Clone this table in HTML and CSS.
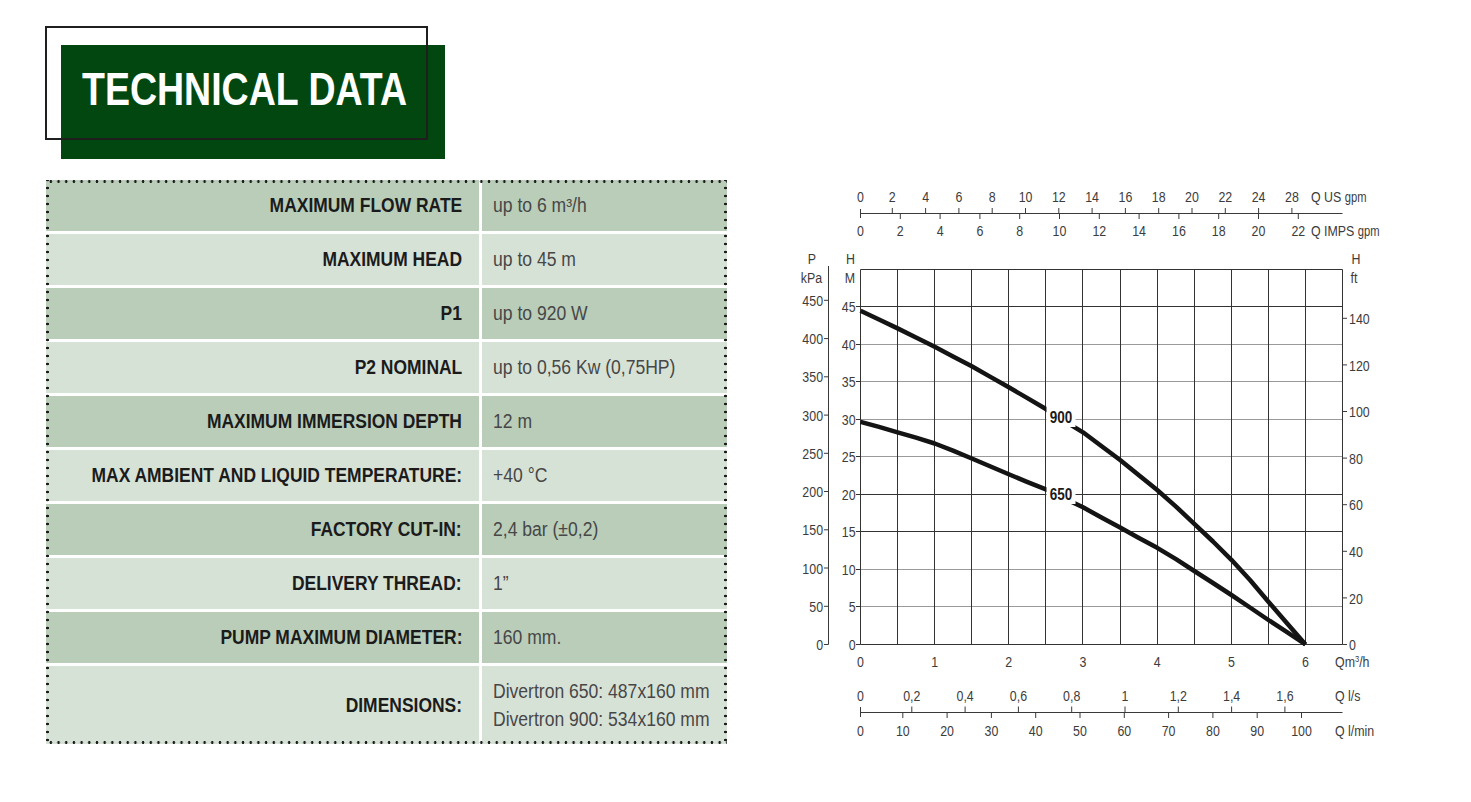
FILE: index.html
```html
<!DOCTYPE html>
<html lang="en">
<head>
<meta charset="utf-8">
<title>Technical data</title>
<link rel="stylesheet" href="styles.css">
</head>
<body>
<main class="sheet">
  <section class="specs">
    <div class="title"><h1>TECHNICAL DATA</h1></div>
    <div class="table">
      <div class="cell k d"><span>MAXIMUM FLOW RATE</span></div><div class="cell v d"><span>up to 6 m³/h</span></div>
      <div class="cell k l"><span>MAXIMUM HEAD</span></div><div class="cell v l"><span>up to 45 m</span></div>
      <div class="cell k d"><span>P1</span></div><div class="cell v d"><span>up to 920 W</span></div>
      <div class="cell k l"><span>P2 NOMINAL</span></div><div class="cell v l"><span>up to 0,56 Kw (0,75HP)</span></div>
      <div class="cell k d"><span>MAXIMUM IMMERSION DEPTH</span></div><div class="cell v d"><span>12 m</span></div>
      <div class="cell k l"><span>MAX AMBIENT AND LIQUID TEMPERATURE:</span></div><div class="cell v l"><span>+40 °C</span></div>
      <div class="cell k d"><span>FACTORY CUT-IN:</span></div><div class="cell v d"><span>2,4 bar (±0,2)</span></div>
      <div class="cell k l"><span>DELIVERY THREAD:</span></div><div class="cell v l"><span>1”</span></div>
      <div class="cell k d"><span>PUMP MAXIMUM DIAMETER:</span></div><div class="cell v d"><span>160 mm.</span></div>
      <div class="cell k l"><span>DIMENSIONS:</span></div><div class="cell v l two"><span>Divertron 650: 487x160 mm<br>Divertron 900: 534x160 mm</span></div>
    </div>
  </section>
  <figure class="chart-wrap">
    <svg class="chart" viewBox="770 180 620 570" width="620" height="570" xmlns="http://www.w3.org/2000/svg">
      <!-- top axis -->
      <g class="axis">
        <line x1="860.5" y1="213.5" x2="1342.5" y2="213.5"/>
        <line x1="860.5" y1="209" x2="860.5" y2="218"/>
        <path d="M892.3 208V213.5M925.6 208V213.5M958.9 208V213.5M992.2 208V213.5M1025.5 208V213.5M1058.8 208V213.5M1092.1 208V213.5M1125.4 208V213.5M1158.7 208V213.5M1192 208V213.5M1225.3 208V213.5M1258.6 208V213.5M1291.9 208V213.5"/>
        <path d="M900.3 213.5V219M940.1 213.5V219M979.9 213.5V219M1019.7 213.5V219M1059.5 213.5V219M1099.3 213.5V219M1139.1 213.5V219M1178.9 213.5V219M1218.7 213.5V219M1258.5 213.5V219M1298.3 213.5V219"/>
      </g>
      <g class="lbl mid">
        <text x="860.5" y="202.5">0</text><text x="892.3" y="202.5">2</text><text x="925.6" y="202.5">4</text><text x="958.9" y="202.5">6</text><text x="992.2" y="202.5">8</text><text x="1025.5" y="202.5">10</text><text x="1058.8" y="202.5">12</text><text x="1092.1" y="202.5">14</text><text x="1125.4" y="202.5">16</text><text x="1158.7" y="202.5">18</text><text x="1192" y="202.5">20</text><text x="1225.3" y="202.5">22</text><text x="1258.6" y="202.5">24</text><text x="1291.9" y="202.5">28</text>
        <text x="860.5" y="236.5">0</text><text x="900.3" y="236.5">2</text><text x="940.1" y="236.5">4</text><text x="979.9" y="236.5">6</text><text x="1019.7" y="236.5">8</text><text x="1059.5" y="236.5">10</text><text x="1099.3" y="236.5">12</text><text x="1139.1" y="236.5">14</text><text x="1178.9" y="236.5">16</text><text x="1218.7" y="236.5">18</text><text x="1258.5" y="236.5">20</text><text x="1298.3" y="236.5">22</text>
      </g>
      <g class="lbl">
        <text x="1311" y="202.5">Q US <tspan class="sm">gpm</tspan></text>
        <text x="1311" y="236.5">Q IMPS <tspan class="sm">gpm</tspan></text>
      </g>

      <!-- grid -->
      <g class="hgray">
        <path d="M860.5 606.5H1342.5M860.5 569.5H1342.5M860.5 456.5H1342.5M860.5 419.5H1342.5M860.5 381.5H1342.5M860.5 344.5H1342.5"/>
      </g>
      <g class="hdark">
        <path d="M860.5 644.5H1342.5M860.5 531.5H1342.5M860.5 494.5H1342.5M860.5 306.5H1342.5M860.5 269.5H1342.5"/>
        <path d="M856 644.5H860.5M856 606.5H860.5M856 569.5H860.5M856 531.5H860.5M856 494.5H860.5M856 456.5H860.5M856 419.5H860.5M856 381.5H860.5M856 344.5H860.5M856 306.5H860.5"/>
      </g>
      <g class="vgrid">
        <path d="M860.5 269.5V644.5M897.5 269.5V644.5M934.5 269.5V644.5M971.5 269.5V644.5M1008.5 269.5V644.5M1045.5 269.5V644.5M1082.5 269.5V644.5M1120.5 269.5V644.5M1157.5 269.5V644.5M1194.5 269.5V644.5M1231.5 269.5V644.5M1268.5 269.5V644.5M1305.5 269.5V644.5M1342.5 269.5V644.5"/>
      </g>

      <!-- side axes -->
      <g class="axis">
        <path d="M828.5 266V644.5"/>
        <path d="M824 644.5H828.5M824 606.3H828.5M824 568H828.5M824 529.8H828.5M824 491.5H828.5M824 453.3H828.5M824 415.1H828.5M824 376.8H828.5M824 338.6H828.5M824 300.3H828.5"/>
        <path d="M1342.5 644.5H1347M1342.5 597.9H1347M1342.5 551.3H1347M1342.5 504.7H1347M1342.5 458.1H1347M1342.5 411.5H1347M1342.5 364.9H1347M1342.5 318.3H1347"/>
      </g>
      <g class="lbl end">
        <text x="823" y="650.2">0</text><text x="823" y="612">50</text><text x="823" y="573.7">100</text><text x="823" y="535.5">150</text><text x="823" y="497.2">200</text><text x="823" y="459">250</text><text x="823" y="420.8">300</text><text x="823" y="382.5">350</text><text x="823" y="344.3">400</text><text x="823" y="306">450</text>
        <text x="855.5" y="650.2">0</text><text x="855.5" y="612.2">5</text><text x="855.5" y="575.2">10</text><text x="855.5" y="537.2">15</text><text x="855.5" y="500.2">20</text><text x="855.5" y="462.2">25</text><text x="855.5" y="425.2">30</text><text x="855.5" y="387.2">35</text><text x="855.5" y="350.2">40</text><text x="855.5" y="312.2">45</text>
      </g>
      <g class="lbl">
        <text x="1349" y="650.2">0</text><text x="1349" y="603.6">20</text><text x="1349" y="557">40</text><text x="1349" y="510.4">60</text><text x="1349" y="463.8">80</text><text x="1349" y="417.2">100</text><text x="1349" y="370.6">120</text><text x="1349" y="324">140</text>
        <text x="1351.5" y="264.5">H</text><text x="1350.5" y="283.5">ft</text>
      </g>
      <g class="lbl mid">
        <text x="812" y="264.5">P</text><text x="811.5" y="283.5">kPa</text>
        <text x="850.5" y="264.5">H</text><text x="850" y="283.5">M</text>
      </g>

      <!-- bottom axes -->
      <g class="lbl mid">
        <text x="860.5" y="667.2">0</text><text x="934.7" y="667.2">1</text><text x="1008.8" y="667.2">2</text><text x="1083" y="667.2">3</text><text x="1157.2" y="667.2">4</text><text x="1231.4" y="667.2">5</text><text x="1305.5" y="667.2">6</text>
        <text x="860.5" y="700.7">0</text><text x="911.8" y="700.7">0,2</text><text x="965.1" y="700.7">0,4</text><text x="1018.4" y="700.7">0,6</text><text x="1071.7" y="700.7">0,8</text><text x="1125" y="700.7">1</text><text x="1178.3" y="700.7">1,2</text><text x="1231.6" y="700.7">1,4</text><text x="1284.9" y="700.7">1,6</text>
        <text x="860.5" y="735.7">0</text><text x="902.8" y="735.7">10</text><text x="947.1" y="735.7">20</text><text x="991.4" y="735.7">30</text><text x="1035.7" y="735.7">40</text><text x="1080" y="735.7">50</text><text x="1124.3" y="735.7">60</text><text x="1168.6" y="735.7">70</text><text x="1212.9" y="735.7">80</text><text x="1257.2" y="735.7">90</text><text x="1301.5" y="735.7">100</text>
      </g>
      <g class="lbl">
        <text x="1335" y="667.2">Qm<tspan class="sup" dy="-5.5">3</tspan><tspan dy="5.5">/h</tspan></text>
        <text x="1335" y="700.7">Q l/s</text>
        <text x="1335" y="735.7">Q l/min</text>
      </g>
      <g class="axis">
        <path d="M860.5 712.5H1342.5M860.5 707V717"/>
        <path d="M911.8 706.5V712.5M965.1 706.5V712.5M1018.4 706.5V712.5M1071.7 706.5V712.5M1125 706.5V712.5M1178.3 706.5V712.5M1231.6 706.5V712.5M1284.9 706.5V712.5"/>
        <path d="M902.8 712.5V718M947.1 712.5V718M991.4 712.5V718M1035.7 712.5V718M1080 712.5V718M1124.3 712.5V718M1168.6 712.5V718M1212.9 712.5V718M1257.2 712.5V718M1301.5 712.5V718"/>
      </g>

      <!-- curves -->
      <polyline class="curve" points="860.5,310.8 879,319.5 897.6,328.4 916,337.5 934.7,346.8 953,356.4 971.8,366.3 990,376.6 1008.8,387.3 1027,397.9 1045.9,409 1068.2,423.3 1083,432.3 1101,445.8 1120.1,460 1138,474.6 1157.2,490 1176,506.6 1194.3,523.8 1213,541.5 1231.4,559.8 1250,580 1268.4,601.8 1287,623.2 1305.5,644.5"/>
      <polyline class="curve" points="860.5,421.8 879,426.9 897.6,432.3 916,437.7 934.7,443.5 953,450.6 971.8,458.5 990,466.2 1008.8,474.3 1027,481.8 1045.9,489.3 1071.9,502 1083,507.3 1101,517.2 1120.1,527.5 1138,537.5 1157.2,547.8 1176,559.2 1194.3,571 1213,583 1231.4,595 1250,607.5 1268.4,620 1287,632.2 1305.5,644.5"/>
      <rect class="tagbg" x="1046.5" y="406" width="29" height="21"/>
      <rect class="tagbg" x="1046.5" y="483" width="29" height="21"/>
      <text class="tag" x="1061" y="423">900</text>
      <text class="tag" x="1061" y="500">650</text>
    </svg>
  </figure>
</main>
</body>
</html>
```

FILE: styles.css
```css
html, body {
  margin: 0;
  padding: 0;
  background: #ffffff;
}

body {
  font-family: "Liberation Sans", Arial, sans-serif;
}

.sheet {
  display: flex;
  align-items: flex-start;
  width: 1471px;
  height: 802px;
  overflow: hidden;
}

.specs {
  margin-left: 46px;
  width: 681px;
  padding-top: 45px;
  flex: none;
}

.title {
  position: relative;
  margin-left: 15px;
  width: 384px;
  height: 114px;
  box-sizing: border-box;
  padding: 20px 0 0 21px;
  background: #02470f;
}

.title::before {
  content: "";
  position: absolute;
  left: -16px;
  top: -19px;
  width: 383px;
  height: 114px;
  box-sizing: border-box;
  border: 2px solid #1f1f1f;
}

.title h1 {
  margin: 0;
  color: #ffffff;
  font-size: 47px;
  line-height: 47px;
  font-weight: 700;
  white-space: nowrap;
  transform: scaleX(0.798);
  transform-origin: 0 0;
}

.table {
  position: relative;
  margin-top: 21px;
  display: grid;
  grid-template-columns: 433px 245px;
  grid-template-rows: repeat(9, 51px) 78px;
  gap: 3px;
}

.table::after {
  content: "";
  position: absolute;
  inset: 0;
  pointer-events: none;
  background:
    radial-gradient(circle, #1c1c1c 1.1px, transparent 1.6px) 1px 0 / 7.7px 3px repeat-x,
    radial-gradient(circle, #1c1c1c 1.1px, transparent 1.6px) 1px 100% / 7.7px 3px repeat-x,
    radial-gradient(circle, #1c1c1c 1.1px, transparent 1.6px) 0 4px / 3px 8px repeat-y,
    radial-gradient(circle, #1c1c1c 1.1px, transparent 1.6px) 100% 4px / 3px 8px repeat-y;
}

.cell {
  display: flex;
  align-items: center;
  white-space: nowrap;
}

.k {
  justify-content: flex-end;
  padding-right: 17px;
  font-size: 19.5px;
  font-weight: 700;
  color: #1b1b1b;
}

.k span {
  display: inline-block;
  transform: scaleX(0.895);
  transform-origin: right center;
}

.v {
  padding-left: 11px;
  font-size: 19.5px;
  color: #474747;
}

.v span {
  display: inline-block;
  transform: scaleX(0.9);
  transform-origin: left center;
}

.two {
  line-height: 28px;
}

.d {
  background: #b9cdb9;
}

.l {
  background: #d7e2d7;
}

.chart-wrap {
  margin: 180px 0 0 43px;
  flex: none;
}

.chart {
  display: block;
}

.chart text {
  transform-box: fill-box;
  transform: scaleX(0.8);
  transform-origin: left center;
}

.lbl text {
  font-size: 15.5px;
  fill: #3c3c3c;
}

.mid text {
  text-anchor: middle;
  transform-origin: center;
}

.end text {
  text-anchor: end;
  transform-origin: right center;
}

.lbl .sm {
  font-size: 14px;
}

.lbl .sup {
  font-size: 9.5px;
}

.axis path,
.axis line {
  stroke: #3a3a3a;
  stroke-width: 1;
  fill: none;
}

.hgray path {
  stroke: #9a9a9a;
  stroke-width: 1;
  fill: none;
}

.hdark path {
  stroke: #333333;
  stroke-width: 1;
  fill: none;
}

.vgrid path {
  stroke: #333333;
  stroke-width: 1;
  fill: none;
}

.curve {
  fill: none;
  stroke: #141414;
  stroke-width: 4.5;
  stroke-linejoin: round;
}

.tagbg {
  fill: #ffffff;
}

.chart .tag {
  font-size: 16.5px;
  font-weight: 700;
  fill: #1b1b1b;
  text-anchor: middle;
  transform-origin: center;
  transform: scaleX(0.82);
}
```
